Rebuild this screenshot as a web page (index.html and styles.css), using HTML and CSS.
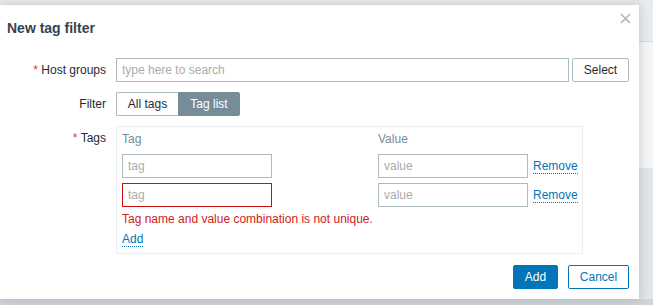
FILE: index.html
```html
<!DOCTYPE html>
<html>
<head>
<meta charset="utf-8">
<link rel="stylesheet" href="styles.css">
</head>
<body>
<div class="page">
  <div class="bg-top"></div>
  <div class="bg-mid"></div>
  <div class="bg-low"></div>
  <div class="bg-foot"></div>
</div>
<div class="modal">
  <button class="close" aria-label="Close">
    <svg width="11" height="11" viewBox="0 0 11 11"><path d="M1 1L10 10M10 1L1 10" stroke="#a9b4bb" stroke-width="1.5" fill="none"/></svg>
  </button>
  <div class="head">New tag filter</div>
  <div class="form">
    <div class="label"><span class="req">*</span> Host groups</div>
    <div class="field host">
      <input class="input grow" type="text" placeholder="type here to search">
      <button class="btn btn-alt">Select</button>
    </div>

    <div class="label">Filter</div>
    <div class="field">
      <div class="seg">
        <span class="seg-item">All tags</span>
        <span class="seg-item on">Tag list</span>
      </div>
    </div>

    <div class="label"><span class="req">*</span> Tags</div>
    <div class="field">
      <div class="tags">
        <div class="th">Tag</div>
        <div class="th">Value</div>
        <div class="th"></div>

        <input class="input cell" type="text" placeholder="tag">
        <input class="input cell" type="text" placeholder="value">
        <a class="link">Remove</a>

        <input class="input cell err" type="text" placeholder="tag">
        <input class="input cell" type="text" placeholder="value">
        <a class="link">Remove</a>

        <div class="errmsg">Tag name and value combination is not unique.</div>
        <div class="addrow"><a class="link">Add</a></div>
      </div>
    </div>
  </div>
  <div class="foot">
    <button class="btn btn-main">Add</button>
    <button class="btn btn-sec">Cancel</button>
  </div>
</div>
</body>
</html>
```

FILE: styles.css
```css
* { box-sizing: border-box; }
html, body {
  margin: 0;
  width: 653px;
  height: 305px;
  overflow: hidden;
}
body {
  position: relative;
  font-family: "Liberation Sans", Arial, sans-serif;
  font-size: 12px;
  color: #1f2c33;
  background: #d3dadf;
}
.page {
  display: flex;
  flex-direction: column;
  height: 305px;
}
.bg-top {
  height: 42px;
  background: #e9ecee;
  border-bottom: 1px solid #d6dce0;
}
.bg-mid {
  height: 126px;
  background: #f4f5f6;
}
.bg-low {
  flex: 1;
  background: #e1e5e8;
}
.bg-foot {
  height: 6px;
  background: #cfd6db;
}

.modal {
  position: absolute;
  left: 0;
  top: 5px;
  width: 639px;
  height: 294px;
  background: #fff;
  box-shadow: 0 0 10px rgba(0, 0, 0, 0.18);
  padding: 0 10px 10px 0;
  display: flex;
  flex-direction: column;
}
.close {
  position: absolute;
  top: 8px;
  right: 8px;
  width: 11px;
  height: 11px;
  padding: 0;
  border: 0;
  background: none;
  display: block;
}
.close svg { display: block; }
.head {
  padding: 15px 0 0 7px;
  height: 53px;
  font-size: 14px;
  line-height: 16px;
  font-weight: bold;
  color: #34444f;
}
.form {
  display: grid;
  grid-template-columns: 106px 1fr;
  column-gap: 10px;
  row-gap: 10px;
}
.label {
  text-align: right;
  line-height: 24px;
  white-space: nowrap;
}
.req { color: #e33734; }
.field { display: flex; }
.host { gap: 3px; }
.grow { flex: 1; }

.input {
  height: 24px;
  border: 1px solid #acbbc2;
  border-radius: 0;
  padding: 0 5px;
  font-family: inherit;
  font-size: 12px;
  color: #1f2c33;
  background: #fff;
  outline: none;
}
.input::placeholder { color: #acacac; opacity: 1; }
.input.err { border-color: #cc1010; }

.btn {
  height: 24px;
  padding: 0 10px;
  font-family: inherit;
  font-size: 12px;
  border-radius: 2px;
  border: 1px solid;
  line-height: 22px;
}
.btn-alt {
  width: 57px;
  background: #fff;
  border-color: #acbbc2;
  color: #1f2c33;
  padding: 0;
}
.btn-main {
  width: 45px;
  padding: 0;
  background: #0275b8;
  border-color: #0275b8;
  color: #fff;
}
.btn-sec {
  width: 61px;
  padding: 0;
  background: #fff;
  border-color: #0275b8;
  color: #0275b8;
}

.seg {
  display: flex;
  height: 24px;
}
.seg-item {
  width: 62px;
  line-height: 22px;
  text-align: center;
  border: 1px solid #acbbc2;
  background: #fff;
}
.seg-item:first-child { border-radius: 2px 0 0 2px; border-right: 0; }
.seg-item.on {
  background: #768d99;
  border-color: #768d99;
  color: #fff;
  border-radius: 0 2px 2px 0;
}

.tags {
  width: 467px;
  height: 128px;
  border: 1px solid #ebeef0;
  padding: 5px 5px 0 5px;
  display: grid;
  grid-template-columns: 256px 155px auto;
  grid-auto-rows: min-content;
  row-gap: 5px;
  align-items: center;
}
.th {
  line-height: 14px;
  color: #768d99;
  margin-bottom: 3px;
}
.cell { width: 150px; }
.link {
  color: #0275b8;
  border-bottom: 1px dotted #0275b8;
  line-height: 14px;
  justify-self: start;
  cursor: pointer;
}
.errmsg {
  grid-column: 1 / -1;
  line-height: 14px;
  color: #d01c1c;
}
.addrow {
  grid-column: 1 / -1;
  padding-top: 1px;
  line-height: 14px;
}
.addrow .link { display: inline-block; }

.foot {
  margin-top: 11px;
  display: flex;
  justify-content: flex-end;
  gap: 10px;
}
```
